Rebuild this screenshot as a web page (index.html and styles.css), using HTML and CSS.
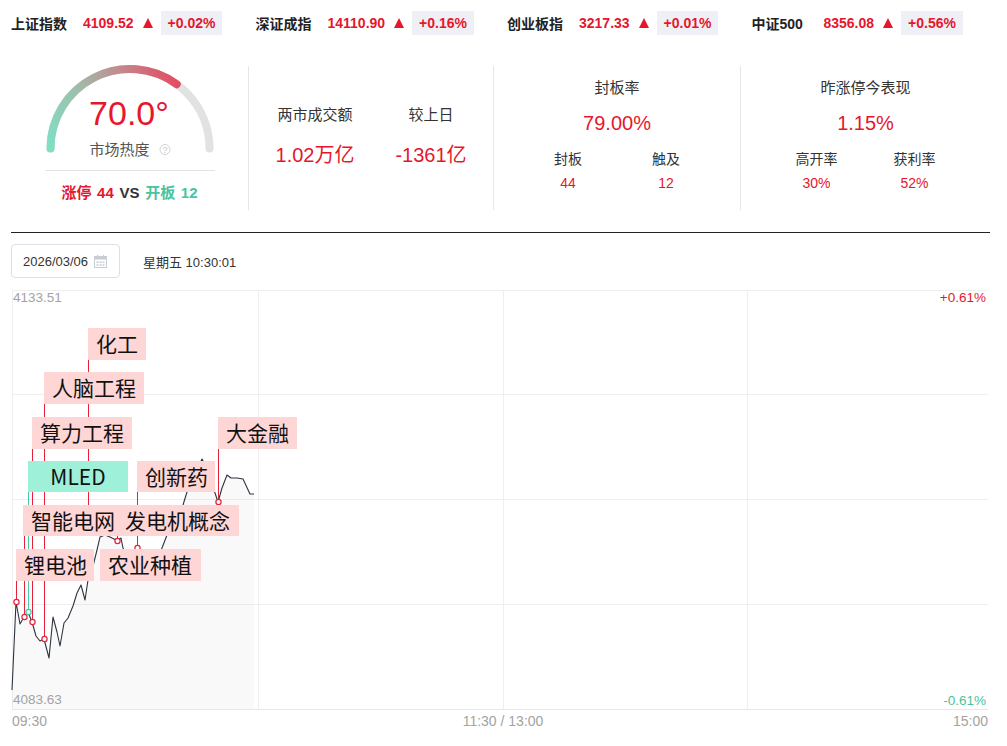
FILE: index.html
```html
<!DOCTYPE html>
<html lang="zh-CN">
<head>
<meta charset="utf-8">
<title>市场热度</title>
<link rel="stylesheet" href="styles.css">
</head>
<body>
<div class="ticker">
  <div class="tick"><span class="tick-name">上证指数</span><span class="tick-price">4109.52</span><span class="tick-arrow"></span><span class="tick-chg">+0.02%</span></div>
  <div class="tick"><span class="tick-name">深证成指</span><span class="tick-price">14110.90</span><span class="tick-arrow"></span><span class="tick-chg">+0.16%</span></div>
  <div class="tick"><span class="tick-name">创业板指</span><span class="tick-price">3217.33</span><span class="tick-arrow"></span><span class="tick-chg">+0.01%</span></div>
  <div class="tick"><span class="tick-name">中证500</span><span class="tick-price">8356.08</span><span class="tick-arrow"></span><span class="tick-chg">+0.56%</span></div>
</div>

<div class="stats">
  <div class="panel gauge-panel">
    <svg class="gauge" width="180" height="104" viewBox="0 0 180 104" overflow="visible">
      <defs>
        <linearGradient id="heat" gradientUnits="userSpaceOnUse" x1="8" y1="82" x2="140" y2="16">
          <stop offset="0" stop-color="#7fe0c4"/>
          <stop offset="0.35" stop-color="#9dbfac"/>
          <stop offset="0.68" stop-color="#c28a8e"/>
          <stop offset="1" stop-color="#e6485f"/>
        </linearGradient>
      </defs>
      <path d="M10.5 82.5 A79.5 79.5 0 0 1 169.5 82.5" fill="none" stroke="#e2e2e2" stroke-width="8" stroke-linecap="round"/>
      <path d="M10.5 82.5 A79.5 79.5 0 0 1 136.7 18.2" fill="none" stroke="url(#heat)" stroke-width="8" stroke-linecap="round"/>
      <text x="89" y="59" class="gauge-value">70.0°</text>
      <text x="49.5" y="89" class="gauge-label">市场热度</text>
      <circle cx="125" cy="83.5" r="5" fill="none" stroke="#d4d4d4" stroke-width="1"/>
      <text x="125" y="87" class="gauge-help">?</text>
    </svg>
    <div class="gauge-divider"></div>
    <div class="gauge-stat"><span class="up">涨停 44</span> <span class="vs">VS</span> <span class="down">开板 12</span></div>
  </div>

  <div class="panel pair">
    <div class="panel-title">两市成交额</div>
    <div class="panel-title">较上日</div>
    <div class="panel-value">1.02万亿</div>
    <div class="panel-value">-1361亿</div>
  </div>

  <div class="panel rate">
    <div class="panel-title">封板率</div>
    <div class="panel-value">79.00%</div>
    <div class="sub">
      <div class="sub-label">封板</div>
      <div class="sub-label">触及</div>
      <div class="sub-value">44</div>
      <div class="sub-value">12</div>
    </div>
  </div>

  <div class="panel rate">
    <div class="panel-title">昨涨停今表现</div>
    <div class="panel-value">1.15%</div>
    <div class="sub">
      <div class="sub-label">高开率</div>
      <div class="sub-label">获利率</div>
      <div class="sub-value">30%</div>
      <div class="sub-value">52%</div>
    </div>
  </div>
</div>

<div class="toolbar">
  <div class="datebox">
    <span>2026/03/06</span>
    <svg class="cal" width="13" height="13" viewBox="0 0 13 13">
      <rect x="0.5" y="1.5" width="12" height="11" fill="none" stroke="#c8ccd4"/>
      <rect x="0.5" y="1.5" width="12" height="3" fill="#c8ccd4"/>
      <rect x="3" y="0" width="1.2" height="3" fill="#c8ccd4"/>
      <rect x="8.8" y="0" width="1.2" height="3" fill="#c8ccd4"/>
      <rect x="2.5" y="6.5" width="2" height="1.5" fill="#c8ccd4"/>
      <rect x="5.5" y="6.5" width="2" height="1.5" fill="#c8ccd4"/>
      <rect x="8.5" y="6.5" width="2" height="1.5" fill="#c8ccd4"/>
      <rect x="2.5" y="9.3" width="2" height="1.5" fill="#c8ccd4"/>
      <rect x="5.5" y="9.3" width="2" height="1.5" fill="#c8ccd4"/>
      <rect x="8.5" y="9.3" width="2" height="1.5" fill="#c8ccd4"/>
    </svg>
  </div>
  <div class="clock">星期五 10:30:01</div>
</div>

<svg class="chart" width="1007" height="460" viewBox="0 286 1007 460">
  <g class="grid">
    <line x1="12" y1="290.5" x2="988" y2="290.5"/>
    <line x1="12" y1="394.5" x2="988" y2="394.5"/>
    <line x1="12" y1="499.5" x2="988" y2="499.5"/>
    <line x1="12" y1="604.5" x2="988" y2="604.5"/>
    <line x1="12.5" y1="290" x2="12.5" y2="709"/>
    <line x1="258.5" y1="290" x2="258.5" y2="709"/>
    <line x1="503.5" y1="290" x2="503.5" y2="709"/>
    <line x1="747.5" y1="290" x2="747.5" y2="709"/>
  </g>
  <line class="axis" x1="12" y1="709.5" x2="988" y2="709.5"/>

  <polygon class="area" points="12,690 16,602 20,624 24,617 28,612 32,622 36,636 40,641 44,639 49,658 53,617 57,632 60,646 64,623 68,618 73,606 77,593 81,585 85,600 88,580 93,566 97,550 100,537 105,535 110,537 114,539 117,541 121,538 123,548 127,556 132,553 137,548 142,556 148,562 154,560 159,556 162,548 167,535 172,522 177,512 183,505 187,492 192,482 197,470 202,459 206,466 210,480 215,493 218,502 222,488 227,475 231,478 237,478 243,479 250,494 254,494 254,709 12,709"/>

  <g class="stems">
    <line x1="88.5" y1="360" x2="88.5" y2="530"/>
    <line x1="44.5" y1="404" x2="44.5" y2="637"/>
    <line x1="32.5" y1="449" x2="32.5" y2="620"/>
    <line x1="218.5" y1="449" x2="218.5" y2="500"/>
    <line x1="137.5" y1="492" x2="137.5" y2="546"/>
    <line x1="24.5" y1="536" x2="24.5" y2="615"/>
    <line x1="117.5" y1="536" x2="117.5" y2="539"/>
    <line x1="16.5" y1="581" x2="16.5" y2="600"/>
  </g>
  <line class="stem-teal" x1="28.5" y1="492" x2="28.5" y2="610"/>

  <polyline class="price" points="12,690 16,602 20,624 24,617 28,612 32,622 36,636 40,641 44,639 49,658 53,617 57,632 60,646 64,623 68,618 73,606 77,593 81,585 85,600 88,580 93,566 97,550 100,537 105,535 110,537 114,539 117,541 121,538 123,548 127,556 132,553 137,548 142,556 148,562 154,560 159,556 162,548 167,535 172,522 177,512 183,505 187,492 192,482 197,470 202,459 206,466 210,480 215,493 218,502 222,488 227,475 231,478 237,478 243,479 250,494 254,494"/>

  <g class="marks">
    <circle cx="16.5" cy="602" r="2.6"/>
    <circle cx="24.5" cy="617" r="2.6"/>
    <circle cx="32.5" cy="622" r="2.6"/>
    <circle cx="44.5" cy="639" r="2.6"/>
    <circle cx="117.5" cy="541" r="2.6"/>
    <circle cx="137.5" cy="548" r="2.6"/>
    <circle cx="218.5" cy="502" r="2.6"/>
  </g>
  <circle class="mark-teal" cx="28.5" cy="612" r="2.6"/>

  <g class="tags">
    <rect x="88" y="328" width="58" height="32"/><text x="96" y="343">化工</text>
    <rect x="44" y="372" width="100" height="32"/><text x="52" y="387">人脑工程</text>
    <rect x="32" y="417" width="100" height="32"/><text x="40" y="432">算力工程</text>
    <rect class="teal" x="28" y="461" width="100" height="31"/><text x="78" y="476" class="mid">MLED</text>
    <rect x="218" y="417" width="79" height="32"/><text x="226" y="432">大金融</text>
    <rect x="137" y="461" width="78" height="31"/><text x="145" y="476">创新药</text>
    <rect x="23" y="505" width="102" height="31"/><text x="31" y="520">智能电网</text>
    <rect x="117" y="505" width="122" height="31"/><text x="125" y="520">发电机概念</text>
    <rect x="16" y="549" width="78" height="32"/><text x="24" y="564">锂电池</text>
    <rect x="100" y="549" width="101" height="32"/><text x="108" y="564">农业种植</text>
  </g>

  <g class="labels">
    <text x="13" y="302">4133.51</text>
    <text x="986" y="301.5" class="end red">+0.61%</text>
    <text x="13" y="704">4083.63</text>
    <text x="986" y="704.5" class="end green">-0.61%</text>
    <text x="12" y="726" class="time">09:30</text>
    <text x="503" y="726" class="mid time">11:30 / 13:00</text>
    <text x="988" y="726" class="end time">15:00</text>
  </g>
</svg>
</body>
</html>
```

FILE: styles.css
```css
* {
  box-sizing: border-box;
}

body {
  margin: 0;
  width: 1007px;
  background: #fff;
  color: #333;
  font-family: "Liberation Sans", "Noto Sans CJK SC", sans-serif;
}

/* ticker */
.ticker {
  display: flex;
  align-items: center;
  gap: 33px;
  height: 45px;
  padding: 0 11px;
}

.tick {
  display: flex;
  align-items: center;
  font-size: 14px;
  font-weight: 700;
}

.tick-name {
  width: 72px;
  color: #222;
}

.tick-price {
  color: #e6162d;
}

.tick-arrow {
  width: 0;
  height: 0;
  border-left: 5.5px solid transparent;
  border-right: 5.5px solid transparent;
  border-bottom: 10px solid #e6162d;
  margin: 0 8px 0 9px;
}

.tick-chg {
  height: 24px;
  line-height: 24px;
  padding: 0 7px;
  background: #eff0f5;
  color: #e6162d;
}

/* stats */
.stats {
  display: grid;
  grid-template-columns: 237px 245px 247px 1fr;
  margin: 0 17px 0 11px;
  padding: 21px 0 22px;
  border-bottom: 1px solid #222;
}

.panel {
  height: 144px;
}

.panel + .panel {
  border-left: 1px solid #e6e6e6;
}

.gauge-panel {
  display: flex;
  flex-direction: column;
  align-items: center;
}

.gauge {
  display: block;
  overflow: visible;
}

.gauge-value {
  font-family: "Liberation Sans", sans-serif;
  font-size: 34px;
  fill: #e6162d;
  text-anchor: middle;
}

.gauge-label {
  font-family: "Noto Sans CJK SC", sans-serif;
  font-size: 15px;
  fill: #555;
}

.gauge-help {
  font-family: "Liberation Sans", sans-serif;
  font-size: 9.5px;
  fill: #c8c8c8;
  text-anchor: middle;
}

.gauge-divider {
  width: 170px;
  height: 1px;
  background: #e3e3e3;
}

.gauge-stat {
  margin-top: 12px;
  font-size: 15px;
  font-weight: 700;
  line-height: 20px;
  word-spacing: 1.5px;
}

.up {
  color: #e6162d;
}

.vs {
  color: #333;
}

.down {
  color: #4cc39a;
}

.panel-title {
  font-size: 15px;
  line-height: 20px;
  color: #333;
  text-align: center;
}

.panel-value {
  font-size: 20px;
  line-height: 24px;
  color: #e6162d;
  text-align: center;
}

.pair {
  display: grid;
  grid-template-columns: 116px 116px;
  justify-content: center;
  align-content: center;
  row-gap: 18px;
  padding: 0 0 4px 4px;
}

.rate {
  display: flex;
  flex-direction: column;
  align-items: center;
  padding-top: 12px;
}

.rate .panel-value {
  margin-top: 13px;
}

.sub {
  display: grid;
  grid-template-columns: 98px 98px;
  row-gap: 6px;
  margin-top: 15px;
  text-align: center;
}

.sub-label {
  font-size: 14px;
  line-height: 18px;
  color: #333;
}

.sub-value {
  font-size: 14px;
  line-height: 18px;
  color: #e6162d;
}

/* toolbar */
.toolbar {
  display: flex;
  align-items: center;
  gap: 23px;
  height: 53px;
  padding: 11px 11px 8px;
}

.datebox {
  display: flex;
  align-items: center;
  gap: 6px;
  width: 109px;
  height: 34px;
  padding-left: 11px;
  border: 1px solid #dcdfe6;
  border-radius: 4px;
  font-size: 13px;
  color: #333;
}

.cal {
  display: block;
}

.clock {
  font-size: 13px;
  color: #333;
}

/* chart */
.chart {
  display: block;
}

.grid line {
  stroke: #efefef;
  stroke-width: 1;
}

.axis {
  stroke: #e8e8e8;
  stroke-width: 1;
}

.area {
  fill: #000;
  fill-opacity: 0.022;
}

.stems line {
  stroke: #e8213a;
  stroke-width: 1;
}

.stem-teal {
  stroke: #47c99f;
  stroke-width: 1;
}

.price {
  fill: none;
  stroke: #2d3340;
  stroke-width: 1.1;
  stroke-linejoin: round;
}

.marks circle {
  fill: #fff;
  stroke: #e8213a;
  stroke-width: 1.2;
}

.mark-teal {
  fill: #fff;
  stroke: #47c99f;
  stroke-width: 1.2;
}

.tags rect {
  fill: #ffd6d6;
}

.tags rect.teal {
  fill: #9ff0d8;
}

.tags text {
  font-family: "Noto Sans CJK SC", sans-serif;
  font-size: 21px;
  fill: #111;
  dominant-baseline: central;
}

.tags text.mid {
  text-anchor: middle;
}

.labels text {
  font-family: "Liberation Sans", sans-serif;
  font-size: 13.5px;
  fill: #a3a3a3;
}

.labels text.time {
  font-size: 14px;
}

.labels text.end {
  text-anchor: end;
}

.labels text.mid {
  text-anchor: middle;
}

.labels text.red {
  fill: #e6162d;
}

.labels text.green {
  fill: #4cc39a;
}
```
